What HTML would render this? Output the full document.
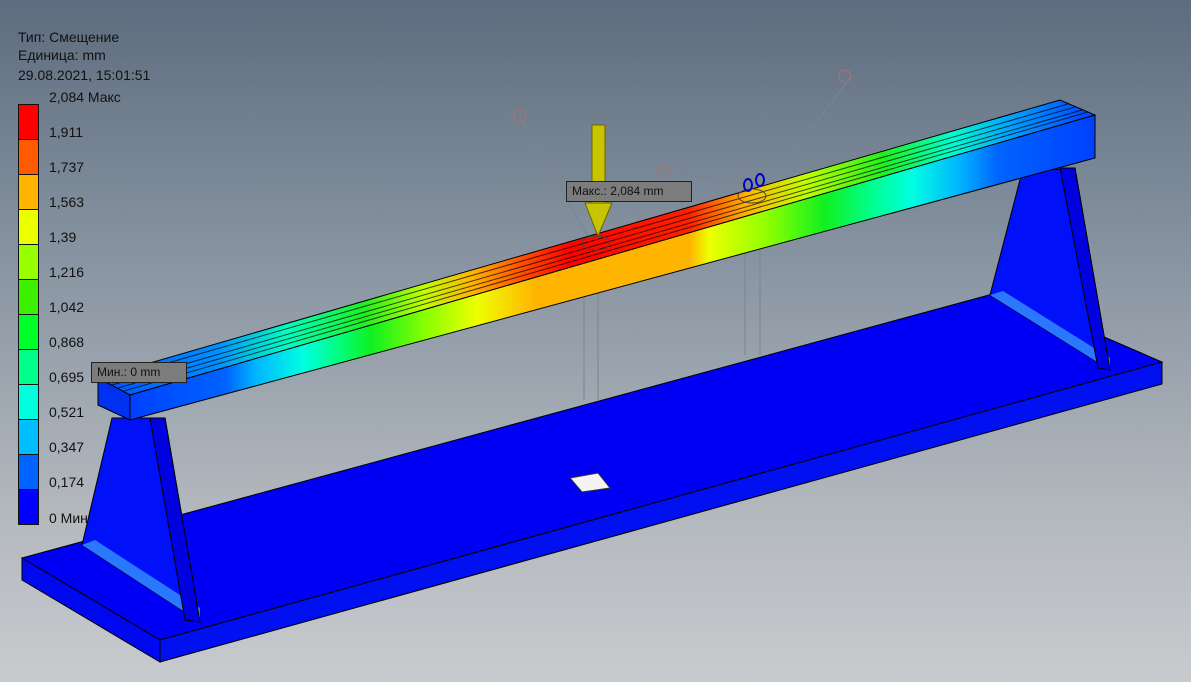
<!DOCTYPE html>
<html><head><meta charset="utf-8"><style>
html,body{margin:0;padding:0;width:1191px;height:682px;overflow:hidden}
body{background:linear-gradient(#5d6c7e 0%,#8a96a3 40%,#b3b8bd 75%,#c8cbce 100%);font-family:"Liberation Sans",sans-serif;position:relative}
.t{position:absolute;color:#111;font-size:14px;line-height:16px;white-space:nowrap}
.lab{position:absolute;background:#7c7c7c;border:1px solid #222;color:#111;font-size:12px;line-height:19px;padding:0 5px;white-space:nowrap}
</style></head><body>
<svg width="1191" height="682" style="position:absolute;left:0;top:0">
<defs>
<linearGradient id="ff" gradientUnits="userSpaceOnUse" x1="130" y1="0" x2="1095" y2="0">
<stop offset="0" stop-color="#0040ff"/><stop offset=".1" stop-color="#0064ff"/>
<stop offset=".13" stop-color="#00b4ff"/><stop offset=".18" stop-color="#00ffe0"/>
<stop offset=".21" stop-color="#00ff90"/><stop offset=".25" stop-color="#10f020"/>
<stop offset=".31" stop-color="#90ff00"/><stop offset=".36" stop-color="#eeff00"/>
<stop offset=".42" stop-color="#ffb400"/><stop offset=".58" stop-color="#ffb400"/>
<stop offset=".6" stop-color="#eeff00"/><stop offset=".66" stop-color="#90ff00"/>
<stop offset=".72" stop-color="#10f020"/><stop offset=".77" stop-color="#00ff90"/>
<stop offset=".81" stop-color="#00ffe0"/><stop offset=".86" stop-color="#00b4ff"/>
<stop offset=".9" stop-color="#0064ff"/><stop offset="1" stop-color="#0040ff"/>
</linearGradient>
<linearGradient id="tf" gradientUnits="userSpaceOnUse" x1="100" y1="0" x2="1080" y2="0">
<stop offset="0" stop-color="#0050ff"/><stop offset=".12" stop-color="#0090ff"/>
<stop offset=".19" stop-color="#00ffc0"/><stop offset=".27" stop-color="#20f020"/>
<stop offset=".33" stop-color="#c0ff00"/><stop offset=".38" stop-color="#ffb400"/>
<stop offset=".43" stop-color="#ff5000"/><stop offset=".48" stop-color="#ff0000"/>
<stop offset=".6" stop-color="#ff2000"/><stop offset=".66" stop-color="#ffb400"/>
<stop offset=".72" stop-color="#c0ff00"/><stop offset=".8" stop-color="#20f020"/>
<stop offset=".87" stop-color="#00ffd0"/><stop offset=".93" stop-color="#00a0ff"/>
<stop offset="1" stop-color="#0050ff"/>
</linearGradient>
</defs>
<!-- base plate -->
<polygon points="22,558 1000,292 1162,362 160,640" fill="#0000f4" stroke="#000" stroke-width="1"/>
<polygon points="160,640 1162,362 1162,384 160,662" fill="#0010f0" stroke="#000" stroke-width="1"/>
<polygon points="22,558 160,640 160,662 22,580" fill="#0008f0" stroke="#000" stroke-width="1"/>
<!-- left pedestal -->
<polygon points="112,418 165,418 200,622 82,545" fill="#0010f8" stroke="#000"/>
<polygon points="82,545 95,540 200,608 200,622" fill="#2a78ff"/>
<polygon points="150,418 165,418 200,622 185,620" fill="#0000e0" stroke="#000"/>
<!-- right pedestal -->
<polygon points="1022,172 1075,168 1110,370 990,295" fill="#0010f8" stroke="#000"/>
<polygon points="990,295 1003,291 1110,358 1110,370" fill="#2a78ff"/>
<polygon points="1060,168 1075,168 1110,370 1098,368" fill="#0000e0" stroke="#000"/>
<!-- rods -->
<g stroke="#7a8592" fill="none" stroke-width="1">
<line x1="584" y1="250" x2="584" y2="400"/><line x1="598" y1="250" x2="598" y2="400"/>
<line x1="745" y1="150" x2="745" y2="355"/><line x1="760" y1="150" x2="760" y2="355"/>
<line x1="520" y1="118" x2="590" y2="240"/><line x1="850" y1="78" x2="765" y2="190"/>
<line x1="665" y1="172" x2="750" y2="185"/>
<circle cx="520" cy="116" r="6" stroke="#b07070"/><circle cx="845" cy="76" r="6" stroke="#b07070"/><circle cx="663" cy="172" r="6" stroke="#b07070"/>
</g>
<!-- beam -->
<polygon points="98,378 1060,100 1095,115 130,395" fill="url(#tf)" stroke="#000"/>
<g stroke="#000" stroke-width="1" opacity=".7">
<line x1="105" y1="381" x2="1068" y2="104"/><line x1="112" y1="385" x2="1075" y2="107"/>
<line x1="118" y1="388" x2="1082" y2="110"/><line x1="124" y1="391" x2="1088" y2="112"/>
</g>
<polygon points="130,395 1095,115 1095,158 130,420" fill="url(#ff)" stroke="#000"/>
<polygon points="98,378 130,395 130,420 98,405" fill="#0030f0" stroke="#000"/>
<!-- force arrow -->
<rect x="592" y="125" width="13" height="78" fill="#c8c400" stroke="#6a6800"/>
<polygon points="585,203 612,203 598,236" fill="#c8c400" stroke="#6a6800"/>
<ellipse cx="596" cy="243" rx="14" ry="7" fill="none" stroke="#444"/>
<ellipse cx="752" cy="196" rx="14" ry="7" fill="none" stroke="#444"/>
<ellipse cx="748" cy="185" rx="4" ry="6" fill="none" stroke="#0000c0" stroke-width="2"/>
<ellipse cx="760" cy="180" rx="4" ry="6" fill="none" stroke="#0000c0" stroke-width="2"/>
<polygon points="570,478 598,473 610,488 582,492" fill="#f4f4f4" stroke="#333"/>
</svg>
<div class="t" style="left:18px;top:29px">Тип: Смещение</div>
<div class="t" style="left:18px;top:47px">Единица: mm</div>
<div class="t" style="left:18px;top:67px">29.08.2021, 15:01:51</div>
<div style="position:absolute;left:18px;top:104px;width:19px;border:1px solid #111">
<div style="height:34px;background:#ff0000;border-bottom:1px solid #111"></div>
<div style="height:34px;background:#ff5a00;border-bottom:1px solid #111"></div>
<div style="height:34px;background:#ffb400;border-bottom:1px solid #111"></div>
<div style="height:34px;background:#ebff00;border-bottom:1px solid #111"></div>
<div style="height:34px;background:#96ff00;border-bottom:1px solid #111"></div>
<div style="height:34px;background:#3cf000;border-bottom:1px solid #111"></div>
<div style="height:34px;background:#00ff28;border-bottom:1px solid #111"></div>
<div style="height:34px;background:#00ff8c;border-bottom:1px solid #111"></div>
<div style="height:34px;background:#00ffdc;border-bottom:1px solid #111"></div>
<div style="height:34px;background:#00beff;border-bottom:1px solid #111"></div>
<div style="height:34px;background:#0064ff;border-bottom:1px solid #111"></div>
<div style="height:34px;background:#0000ff"></div>
</div>
<div class="t" style="left:49px;top:89px">2,084 Макс</div>
<div class="t" style="left:49px;top:124px">1,911</div>
<div class="t" style="left:49px;top:159px">1,737</div>
<div class="t" style="left:49px;top:194px">1,563</div>
<div class="t" style="left:49px;top:229px">1,39</div>
<div class="t" style="left:49px;top:264px">1,216</div>
<div class="t" style="left:49px;top:299px">1,042</div>
<div class="t" style="left:49px;top:334px">0,868</div>
<div class="t" style="left:49px;top:369px">0,695</div>
<div class="t" style="left:49px;top:404px">0,521</div>
<div class="t" style="left:49px;top:439px">0,347</div>
<div class="t" style="left:49px;top:474px">0,174</div>
<div class="t" style="left:49px;top:510px">0 Мин</div>
<div class="lab" style="left:566px;top:181px;width:114px">Макс.: 2,084 mm</div>
<div class="lab" style="left:91px;top:362px;width:84px">Мин.: 0 mm</div>
</body></html>
